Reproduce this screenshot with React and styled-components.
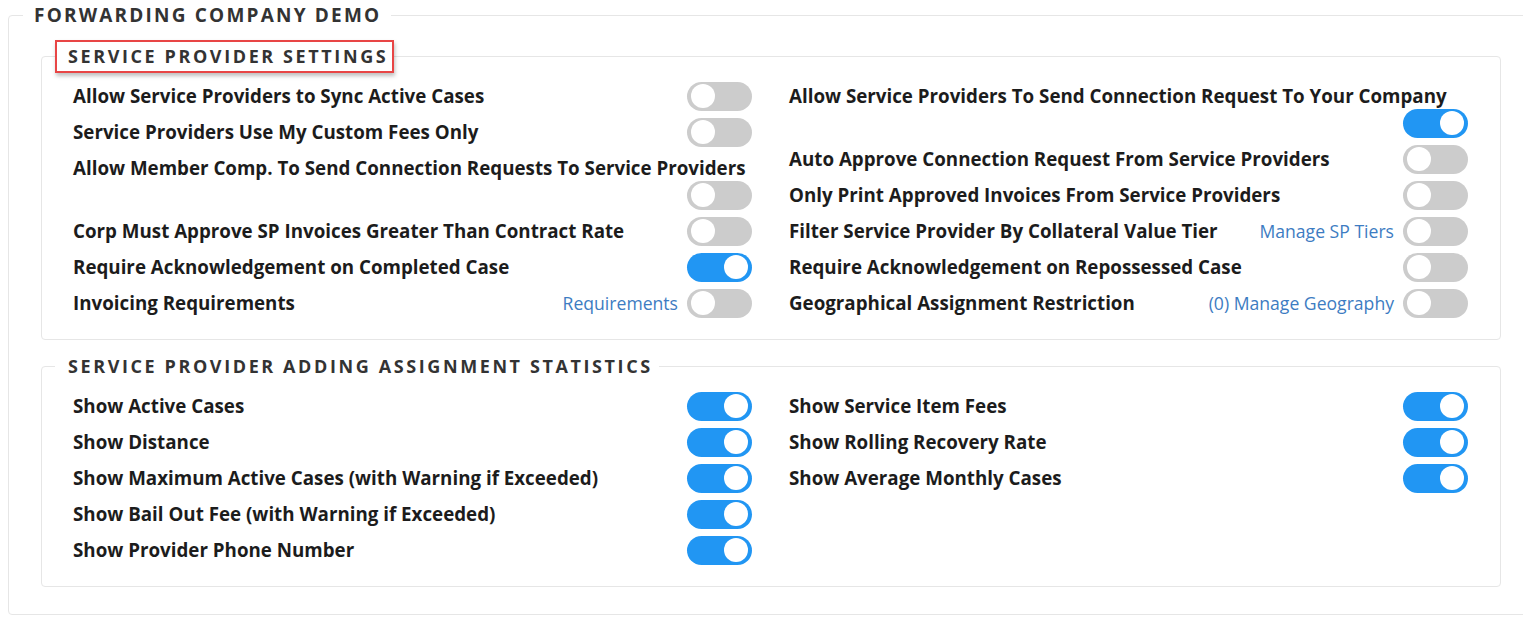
import React from 'react';
import styled, { createGlobalStyle } from 'styled-components';

const GlobalStyle = createGlobalStyle`
  html, body {
    margin: 0;
    padding: 0;
    background: #ffffff;
    overflow: hidden;
  }
  body {
    font-family: "Open Sans", "Liberation Sans", sans-serif;
    color: #222;
  }
`;

const Page = styled.div`
  width: 1540px;
  padding: 0 0 0 8px;
`;

const OuterSet = styled.fieldset`
  margin: 0;
  padding: 10px 32px 27px 32px;
  border: 1px solid #e6e6e6;
  border-radius: 4px;
`;

const OuterLegend = styled.legend`
  margin-left: -18px;
  padding: 0 10px 0 11px;
  font-size: 19px;
  font-weight: 700;
  letter-spacing: 2.2px;
  color: #333;
  line-height: 30px;
`;

const Section = styled.fieldset`
  margin: ${p => (p.$first ? '0' : '10px 0 0 0')};
  padding: 5px 32px 18px 31px;
  border: 1px solid #e6e6e6;
  border-radius: 4px;
  width: 1395px;
`;

const SectionLegend = styled.legend`
  margin-left: -18px;
  padding: 0 4px 0 11px;
  font-size: 18px;
  font-weight: 700;
  letter-spacing: 2.6px;
  color: #333;
  line-height: 29px;
  border: 2px solid ${p => (p.$marked ? '#e84545' : 'transparent')};
  box-shadow: ${p => (p.$marked ? '1px 3px 4px rgba(0,0,0,0.25)' : 'none')};
`;

const Columns = styled.div`
  display: grid;
  grid-template-columns: 1fr 1fr;
  column-gap: 37px;
`;

const Column = styled.div`
  display: flex;
  flex-direction: column;
`;

const Row = styled.div`
  display: flex;
  flex-wrap: wrap;
  align-items: flex-start;
  min-height: 36px;
`;

const Label = styled.span`
  font-size: 18.75px;
  font-weight: 700;
  line-height: 36px;
  margin-bottom: -9px;
  color: #1c1c1c;
`;

const Controls = styled.div`
  margin-left: auto;
  display: flex;
  align-items: center;
  gap: 9px;
  height: 36px;
`;

const Link = styled.a`
  font-size: 17.6px;
  color: #3d7cc2;
  text-decoration: none;
  cursor: pointer;
`;

const Switch = styled.span`
  position: relative;
  display: inline-block;
  width: 65px;
  height: 29px;
  border-radius: 15px;
  background: ${p => (p.$on ? '#2196f3' : '#cccccc')};
  cursor: pointer;

  &::after {
    content: '';
    position: absolute;
    top: 2.5px;
    left: ${p => (p.$on ? '37px' : '4px')};
    width: 24px;
    height: 24px;
    border-radius: 50%;
    background: #ffffff;
  }
`;

const settingsLeft = [
  { label: 'Allow Service Providers to Sync Active Cases', on: false },
  { label: 'Service Providers Use My Custom Fees Only', on: false },
  { label: 'Allow Member Comp. To Send Connection Requests To Service Providers', on: false },
  { label: 'Corp Must Approve SP Invoices Greater Than Contract Rate', on: false },
  { label: 'Require Acknowledgement on Completed Case', on: true },
  { label: 'Invoicing Requirements', on: false, link: 'Requirements' },
];

const settingsRight = [
  { label: 'Allow Service Providers To Send Connection Request To Your Company', on: true },
  { label: 'Auto Approve Connection Request From Service Providers', on: false },
  { label: 'Only Print Approved Invoices From Service Providers', on: false },
  { label: 'Filter Service Provider By Collateral Value Tier', on: false, link: 'Manage SP Tiers' },
  { label: 'Require Acknowledgement on Repossessed Case', on: false },
  { label: 'Geographical Assignment Restriction', on: false, link: '(0) Manage Geography' },
];

const statsLeft = [
  { label: 'Show Active Cases', on: true },
  { label: 'Show Distance', on: true },
  { label: 'Show Maximum Active Cases (with Warning if Exceeded)', on: true },
  { label: 'Show Bail Out Fee (with Warning if Exceeded)', on: true },
  { label: 'Show Provider Phone Number', on: true },
];

const statsRight = [
  { label: 'Show Service Item Fees', on: true },
  { label: 'Show Rolling Recovery Rate', on: true },
  { label: 'Show Average Monthly Cases', on: true },
];

function SettingRow({ item }) {
  return (
    <Row>
      <Label>{item.label}</Label>
      <Controls>
        {item.link && <Link>{item.link}</Link>}
        <Switch $on={item.on} />
      </Controls>
    </Row>
  );
}

function SettingColumn({ items }) {
  return (
    <Column>
      {items.map(item => (
        <SettingRow key={item.label} item={item} />
      ))}
    </Column>
  );
}

export default function App() {
  return (
    <Page>
      <GlobalStyle />
      <OuterSet>
        <OuterLegend>FORWARDING COMPANY DEMO</OuterLegend>
        <Section $first>
          <SectionLegend $marked>SERVICE PROVIDER SETTINGS</SectionLegend>
          <Columns>
            <SettingColumn items={settingsLeft} />
            <SettingColumn items={settingsRight} />
          </Columns>
        </Section>
        <Section>
          <SectionLegend>SERVICE PROVIDER ADDING ASSIGNMENT STATISTICS</SectionLegend>
          <Columns>
            <SettingColumn items={statsLeft} />
            <SettingColumn items={statsRight} />
          </Columns>
        </Section>
      </OuterSet>
    </Page>
  );
}
